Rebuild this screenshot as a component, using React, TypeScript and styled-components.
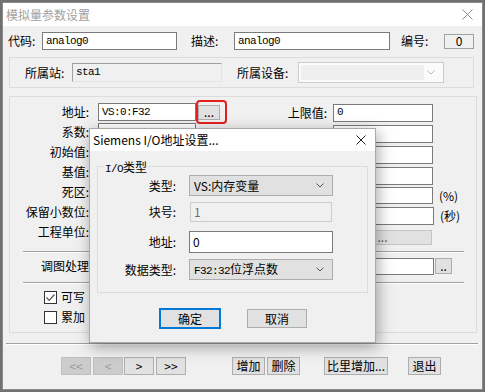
import React from "react";
import styled, { createGlobalStyle } from "styled-components";

const SANS = `"Noto Sans CJK SC", "Noto Sans", sans-serif`;
const MONO = `"Liberation Mono", "Noto Sans CJK SC", monospace`;

const Global = createGlobalStyle`
  html, body { margin: 0; padding: 0; }
  body {
    background: #707070;
    width: 485px;
    height: 392px;
    overflow: hidden;
    font-family: ${SANS};
    font-size: 12px;
    color: #000;
  }
  * { box-sizing: border-box; }
`;

const Window = styled.div`
  position: relative;
  margin: 2px 0 0 2px;
  width: 481px;
  height: 388px;
  border: 1px solid #8a8a8a;
  background: #f0f0f0;
  display: flex;
  flex-direction: column;
`;

const TitleBar = styled.div<{ $h: number; $active?: boolean; $pl: number; $pr: number }>`
  height: ${(p) => p.$h}px;
  flex: none;
  background: #fff;
  display: flex;
  align-items: center;
  justify-content: space-between;
  padding: 0 ${(p) => p.$pr}px 0 ${(p) => p.$pl}px;
  color: ${(p) => (p.$active ? "#000" : "#a0a0a0")};
  font-size: 12px;
  line-height: 1;
`;

const Row = styled.div<{ $h: number; $mt?: number; $ml?: number }>`
  display: flex;
  align-items: center;
  height: ${(p) => p.$h}px;
  flex: none;
  margin-top: ${(p) => p.$mt ?? 0}px;
  margin-left: ${(p) => p.$ml ?? 0}px;
`;

const Label = styled.span<{ $w: number; $pl?: number; $pr?: number; $right?: boolean }>`
  display: block;
  flex: none;
  width: ${(p) => p.$w}px;
  padding-left: ${(p) => p.$pl ?? 0}px;
  padding-right: ${(p) => p.$pr ?? 0}px;
  text-align: ${(p) => (p.$right ? "right" : "left")};
  white-space: nowrap;
  line-height: 1;
`;

type FieldKind = "edit" | "readonly" | "disabled" | "static";

const Field = styled.div<{ $w: number; $h: number; $kind?: FieldKind; $mono?: boolean; $center?: boolean; $ml?: number }>`
  flex: none;
  width: ${(p) => p.$w}px;
  height: ${(p) => p.$h}px;
  margin-left: ${(p) => p.$ml ?? 0}px;
  display: flex;
  align-items: center;
  justify-content: ${(p) => (p.$center ? "center" : "flex-start")};
  padding-left: ${(p) => (p.$center ? 0 : 3)}px;
  white-space: nowrap;
  overflow: ${(p) => (p.$center ? "visible" : "hidden")};
  line-height: 1;
  font-family: ${(p) => (p.$mono ? MONO : SANS)};
  font-size: ${(p) => (p.$mono ? "11px" : "12px")};
  letter-spacing: ${(p) => (p.$mono ? "-0.6px" : "0")};
  ${(p) => {
    switch (p.$kind) {
      case "readonly":
        return `background:#f0f0f0;border:1px solid #e3e3e3;border-top-color:#a0a0a0;border-left-color:#a0a0a0;`;
      case "disabled":
        return `background:#f0f0f0;border:1px solid #cccccc;color:#6d6d6d;`;
      case "static":
        return `background:#f0f0f0;border:1px solid #a0a0a0;`;
      default:
        return `background:#fff;border:1px solid #7a7a7a;`;
    }
  }}
`;

const ComboBox = styled.div<{ $w: number; $h: number; $mono?: boolean; $disabled?: boolean }>`
  flex: none;
  width: ${(p) => p.$w}px;
  height: ${(p) => p.$h}px;
  display: flex;
  align-items: center;
  justify-content: space-between;
  padding: 0 8px 0 4px;
  background: ${(p) => (p.$disabled ? "#fbfbfb" : "#e1e1e1")};
  border: 1px solid ${(p) => (p.$disabled ? "#cccccc" : "#adadad")};
  white-space: nowrap;
  line-height: 1;
  font-family: ${(p) => (p.$mono ? MONO : SANS)};
  font-size: 12px;
`;

const ComboInner = styled.div`
  width: 123px;
  height: 15px;
  margin-left: -2px;
  background: #efefef;
`;

const MonoText = styled.span`
  font-family: ${MONO};
  font-size: 11px;
  letter-spacing: -0.6px;
`;

const Button = styled.div<{ $w: number; $h: number; $ml?: number; $disabled?: boolean; $default?: boolean; $soft?: boolean }>`
  flex: none;
  width: ${(p) => p.$w}px;
  height: ${(p) => p.$h}px;
  margin-left: ${(p) => p.$ml ?? 0}px;
  display: flex;
  align-items: center;
  justify-content: center;
  white-space: nowrap;
  overflow: hidden;
  line-height: 1;
  font-size: 12px;
  background: ${(p) => (p.$disabled ? "#cccccc" : "#e1e1e1")};
  color: ${(p) => (p.$disabled ? "#9a9a9a" : p.$soft ? "#555" : "#000")};
  border: ${(p) =>
    p.$default ? "2px solid #0078d7" : p.$disabled ? "1px solid #bfbfbf" : p.$soft ? "1px solid #c4c4c4" : "1px solid #adadad"};
`;

const Highlight = styled.div`
  flex: none;
  width: 31px;
  height: 24px;
  border: 2px solid #e3211f;
  border-radius: 4px;
  display: flex;
  align-items: center;
`;

const GroupBox = styled.div<{ $w: number; $h: number; $mt: number; $ml: number }>`
  position: relative;
  flex: none;
  width: ${(p) => p.$w}px;
  height: ${(p) => p.$h}px;
  margin-top: ${(p) => p.$mt}px;
  margin-left: ${(p) => p.$ml}px;
  border: 1px solid #dcdcdc;
  display: flex;
  flex-direction: column;
`;

const StationGroup = styled(GroupBox)`
  flex-direction: row;
  align-items: center;
`;

const Columns = styled.div`
  display: flex;
  padding-top: 5px;
`;

const Col = styled.div<{ $w?: number }>`
  display: flex;
  flex-direction: column;
  ${(p) => (p.$w ? `width:${p.$w}px;flex:none;` : "")}
`;

const Suffix = styled.span`
  margin-left: 6px;
  line-height: 1;
  white-space: nowrap;
`;

const Separator = styled.div<{ $w: number; $mt: number; $ml: number }>`
  flex: none;
  width: ${(p) => p.$w}px;
  margin-top: ${(p) => p.$mt}px;
  margin-left: ${(p) => p.$ml}px;
  height: 2px;
  border-top: 1px solid #a0a0a0;
  border-bottom: 1px solid #ffffff;
`;

const Checks = styled.div`
  display: flex;
  flex-direction: column;
  padding-top: 3px;
`;

const CheckRow = styled.div`
  display: flex;
  align-items: center;
  height: 20px;
  padding-left: 34px;
  gap: 4px;
  line-height: 1;
`;

const CheckBox = styled.div`
  width: 13px;
  height: 13px;
  border: 1px solid #333;
  background: #fff;
  display: flex;
  align-items: center;
  justify-content: center;
`;

const NavBar = styled.div`
  display: flex;
  align-items: center;
  height: 18px;
  margin-top: 12px;
  padding-left: 58px;
`;

/* ---- modal ---- */
const Modal = styled.div`
  position: absolute;
  left: 86px;
  top: 125px;
  width: 287px;
  height: 215px;
  background: #f0f0f0;
  border: 1px solid #a8a8a8;
  box-shadow: 2px 4px 14px rgba(0, 0, 0, 0.35);
  display: flex;
  flex-direction: column;
  z-index: 10;
`;

const Legend = styled.span`
  position: absolute;
  left: 6px;
  top: -8px;
  padding: 0 1px;
  background: #f0f0f0;
  line-height: 16px;
  white-space: nowrap;
`;

const ModalRows = styled.div`
  display: flex;
  flex-direction: column;
  padding-top: 8px;
`;

const ModalButtons = styled.div`
  display: flex;
  align-items: center;
  height: 21px;
  margin-top: 15px;
  padding-left: 69px;
`;

const CloseIcon: React.FC<{ size: number; color: string }> = ({ size, color }) => (
  <svg width={size} height={size} viewBox={`0 0 ${size} ${size}`}>
    <path d={`M0.5 0.5 L${size - 0.5} ${size - 0.5} M${size - 0.5} 0.5 L0.5 ${size - 0.5}`} stroke={color} strokeWidth="1" fill="none" />
  </svg>
);

const Chevron: React.FC<{ color?: string }> = ({ color = "#555" }) => (
  <svg width="8" height="5" viewBox="0 0 8 5">
    <polyline points="0.5,0.5 4,4 7.5,0.5" stroke={color} strokeWidth="1" fill="none" />
  </svg>
);

const CheckMark = () => (
  <svg width="11" height="11" viewBox="0 0 11 11">
    <polyline points="1.5,5.5 4.2,8.3 9.5,2.5" stroke="#555" strokeWidth="1.2" fill="none" />
  </svg>
);

const leftRows = ["系数:", "初始值:", "基值:", "死区:", "保留小数位:", "工程单位:"];

export default function App() {
  return (
    <>
      <Global />
      <Window>
        <TitleBar $h={23} $pl={3} $pr={9}>
          <span>模拟量参数设置</span>
          <CloseIcon size={11} color="#8a8a8a" />
        </TitleBar>

        <Row $h={18} $mt={6} $ml={5}>
          <Label $w={34}>代码:</Label>
          <Field $w={135} $h={18} $mono>analog0</Field>
          <Label $w={57} $pl={14}>描述:</Label>
          <Field $w={156} $h={18} $mono>analog0</Field>
          <Label $w={54} $pl={11}>编号:</Label>
          <Field $w={30} $h={15} $kind="static" $center>0</Field>
        </Row>

        <StationGroup $w={465} $h={31} $mt={7} $ml={6}>
          <Label $w={62} $pl={15}>所属站:</Label>
          <Field $w={150} $h={19} $kind="readonly" $mono>sta1</Field>
          <Label $w={76} $pl={15}>所属设备:</Label>
          <ComboBox $w={146} $h={21} $disabled>
            <ComboInner />
            <Chevron color="#b8b8b8" />
          </ComboBox>
        </StationGroup>

        <GroupBox $w={468} $h={237} $mt={8} $ml={6}>
          <Columns>
            <Col $w={216}>
              <Row $h={20}>
                <Label $w={88} $pr={9} $right>地址:</Label>
                <Field $w={98} $h={18} $mono>VS:0:F32</Field>
                <Highlight>
                  <Button $w={22} $h={15}>...</Button>
                </Highlight>
              </Row>
              {leftRows.map((t) => (
                <Row $h={20} key={t}>
                  <Label $w={88} $pr={9} $right>{t}</Label>
                  <Field $w={98} $h={18} />
                </Row>
              ))}
            </Col>
            <Col>
              <Row $h={21}>
                <Label $w={107} $pr={6} $right>上限值:</Label>
                <Field $w={100} $h={18} $mono>0</Field>
              </Row>
              <Row $h={21}>
                <Label $w={107} $pr={6} $right>下限值:</Label>
                <Field $w={100} $h={18} />
              </Row>
              <Row $h={21}>
                <Label $w={107} $pr={6} $right>最大值:</Label>
                <Field $w={100} $h={18} />
              </Row>
              <Row $h={21}>
                <Label $w={107} $pr={6} $right>最小值:</Label>
                <Field $w={100} $h={18} />
              </Row>
              <Row $h={19}>
                <Label $w={107} $pr={6} $right>变化率:</Label>
                <Field $w={100} $h={17} />
                <Suffix>(%)</Suffix>
              </Row>
              <Row $h={21}>
                <Label $w={107} $pr={6} $right>周期:</Label>
                <Field $w={101} $h={18} />
                <Suffix>(秒)</Suffix>
              </Row>
              <Row $h={22}>
                <Label $w={107} $pr={6} $right>单位:</Label>
                <Button $w={99} $h={15} $soft>...</Button>
              </Row>
            </Col>
          </Columns>

          <Separator $w={441} $mt={3} $ml={13} />
          <Row $h={26}>
            <Label $w={88} $pr={9} $right>调图处理</Label>
            <Field $w={336} $h={17} />
            <Button $w={17} $h={16} $ml={1}>..</Button>
          </Row>
          <Separator $w={441} $mt={3} $ml={13} />

          <Checks>
            <CheckRow>
              <CheckBox><CheckMark /></CheckBox>
              <span>可写</span>
            </CheckRow>
            <CheckRow>
              <CheckBox />
              <span>累加</span>
            </CheckRow>
          </Checks>
        </GroupBox>

        <Separator $w={472} $mt={10} $ml={3} />

        <NavBar>
          <Button $w={30} $h={18} $disabled>&lt;&lt;</Button>
          <Button $w={30} $h={18} $ml={2} $disabled>&lt;</Button>
          <Button $w={30} $h={18} $ml={1}>&gt;</Button>
          <Button $w={30} $h={18} $ml={2}>&gt;&gt;</Button>
          <Button $w={33} $h={18} $ml={46}>增加</Button>
          <Button $w={33} $h={18} $ml={2}>删除</Button>
          <Button $w={64} $h={18} $ml={24}>比里增加...</Button>
          <Button $w={33} $h={18} $ml={20}>退出</Button>
        </NavBar>

        <Modal>
          <TitleBar $h={22} $pl={3} $pr={9} $active>
            <span>Siemens I/O地址设置...</span>
            <CloseIcon size={10} color="#222" />
          </TitleBar>
          <GroupBox $w={271} $h={127} $mt={15} $ml={7}>
            <Legend><MonoText>I/O</MonoText>类型</Legend>
            <ModalRows>
              <Row $h={21}>
                <Label $w={91} $pr={13} $right>类型:</Label>
                <ComboBox $w={144} $h={21}>
                  <span>VS:内存变量</span>
                  <Chevron />
                </ComboBox>
              </Row>
              <Row $h={20} $mt={6}>
                <Label $w={91} $pr={13} $right>块号:</Label>
                <Field $w={142} $h={20} $kind="disabled" $ml={1}>1</Field>
              </Row>
              <Row $h={22} $mt={9}>
                <Label $w={91} $pr={13} $right>地址:</Label>
                <Field $w={144} $h={22}>0</Field>
              </Row>
              <Row $h={21} $mt={6}>
                <Label $w={91} $pr={13} $right>数据类型:</Label>
                <ComboBox $w={144} $h={21}>
                  <span><MonoText>F32:32</MonoText>位浮点数</span>
                  <Chevron />
                </ComboBox>
              </Row>
            </ModalRows>
          </GroupBox>
          <ModalButtons>
            <Button $w={62} $h={21} $default>确定</Button>
            <Button $w={60} $h={19} $ml={26}>取消</Button>
          </ModalButtons>
        </Modal>
      </Window>
    </>
  );
}
